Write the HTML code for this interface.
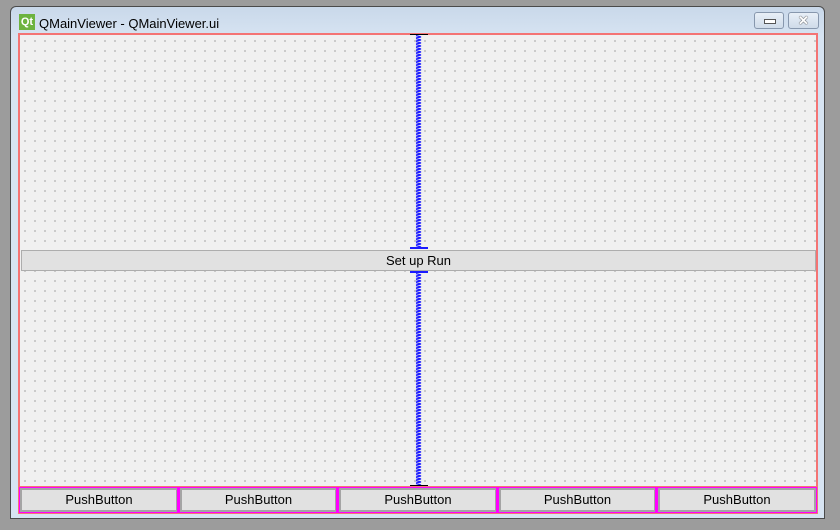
<!DOCTYPE html>
<html><head><style>
body{margin:0;width:840px;height:530px;background:#9c9c9c;position:relative;overflow:hidden;font-family:"Liberation Sans",sans-serif;}
.win{position:absolute;left:10px;top:6px;width:815px;height:513px;background:linear-gradient(#c9d8ea,#d7e4f2 30px,#d7e4f2);border:1px solid #4a4a4a;border-radius:6px 6px 0 0;box-sizing:border-box;}
.title{position:absolute;left:39px;top:16px;font-size:13px;color:#000;}
.logo{position:absolute;left:19px;top:14px;width:16px;height:16px;background:#6db33f;color:#fff;font-size:11px;font-weight:bold;line-height:16px;text-align:center;}
.btn{position:absolute;top:12px;height:17px;border:1px solid #8797ad;border-radius:3px;background:linear-gradient(#e8eff7,#cfdbe9);box-sizing:border-box;}
.area{position:absolute;left:18px;top:33px;width:800px;height:455px;border:2px solid #f47474;box-sizing:border-box;background-color:#f0f0f0;background-image:radial-gradient(circle,#9a9a9a 0.6px,transparent 0.9px);background-size:10px 10px;background-position:0px 1px;}
.spring{position:absolute;left:415px;width:7px;}
.cap{position:absolute;left:410px;width:18px;height:2px;background:#1a1aff;}
.setup{position:absolute;left:21px;top:250px;width:795px;height:21px;background:#e1e1e1;border:1px solid #adadad;box-sizing:border-box;text-align:center;font-size:13px;line-height:19px;}
.bottom{position:absolute;left:18px;top:486px;width:800px;height:28px;background:#f47474;}
.pb{position:absolute;top:488px;height:24px;background:#e1e1e1;border:2px solid #a4a4a4;box-shadow:0 0 0 1px #ff00ff;box-sizing:border-box;text-align:center;font-size:13px;line-height:20px;}
.sep{position:absolute;top:488px;width:3px;height:24px;background:#ff00ff;}
</style></head><body>
<svg width="0" height="0" style="position:absolute"><defs><pattern id="z" width="7" height="3" patternUnits="userSpaceOnUse"><path d="M1 0.5 L6 2 L1 3" stroke="#1a1aff" stroke-width="1.2" fill="none"/></pattern></defs></svg>
<div class="win"></div>
<div class="logo">Qt</div>
<div class="title">QMainViewer - QMainViewer.ui</div>
<div class="btn" style="left:754px;width:30px"><div style="position:absolute;left:9px;top:6px;width:10px;height:3px;border:1px solid #555;background:#fff"></div></div>
<div class="btn" style="left:788px;width:31px;text-align:center;font-size:13px;font-weight:bold;color:#fff;line-height:15px;text-shadow:0 0 1px #333,0 0 1px #333">✕</div>
<div class="area"></div>
<svg class="spring" style="top:35px" height="213" width="7"><rect width="7" height="213" fill="url(#z)"/></svg>
<div class="cap" style="top:34px;background:#000;height:1px"></div>
<div class="cap" style="top:247px"></div>
<div class="cap" style="top:271px"></div>
<svg class="spring" style="top:273px" height="212" width="7"><rect width="7" height="212" fill="url(#z)"/></svg>
<div class="cap" style="top:485px;background:#000;height:1px"></div>
<div class="setup">Set up Run</div>
<div class="bottom"></div>
<div class="pb" style="left:20px;width:158px">PushButton</div>
<div class="pb" style="left:180px;width:157px">PushButton</div>
<div class="pb" style="left:339px;width:158px">PushButton</div>
<div class="pb" style="left:499px;width:157px">PushButton</div>
<div class="pb" style="left:658px;width:158px">PushButton</div>
<div class="sep" style="left:177px"></div>
<div class="sep" style="left:336px"></div>
<div class="sep" style="left:496px"></div>
<div class="sep" style="left:655px"></div>
</body></html>
